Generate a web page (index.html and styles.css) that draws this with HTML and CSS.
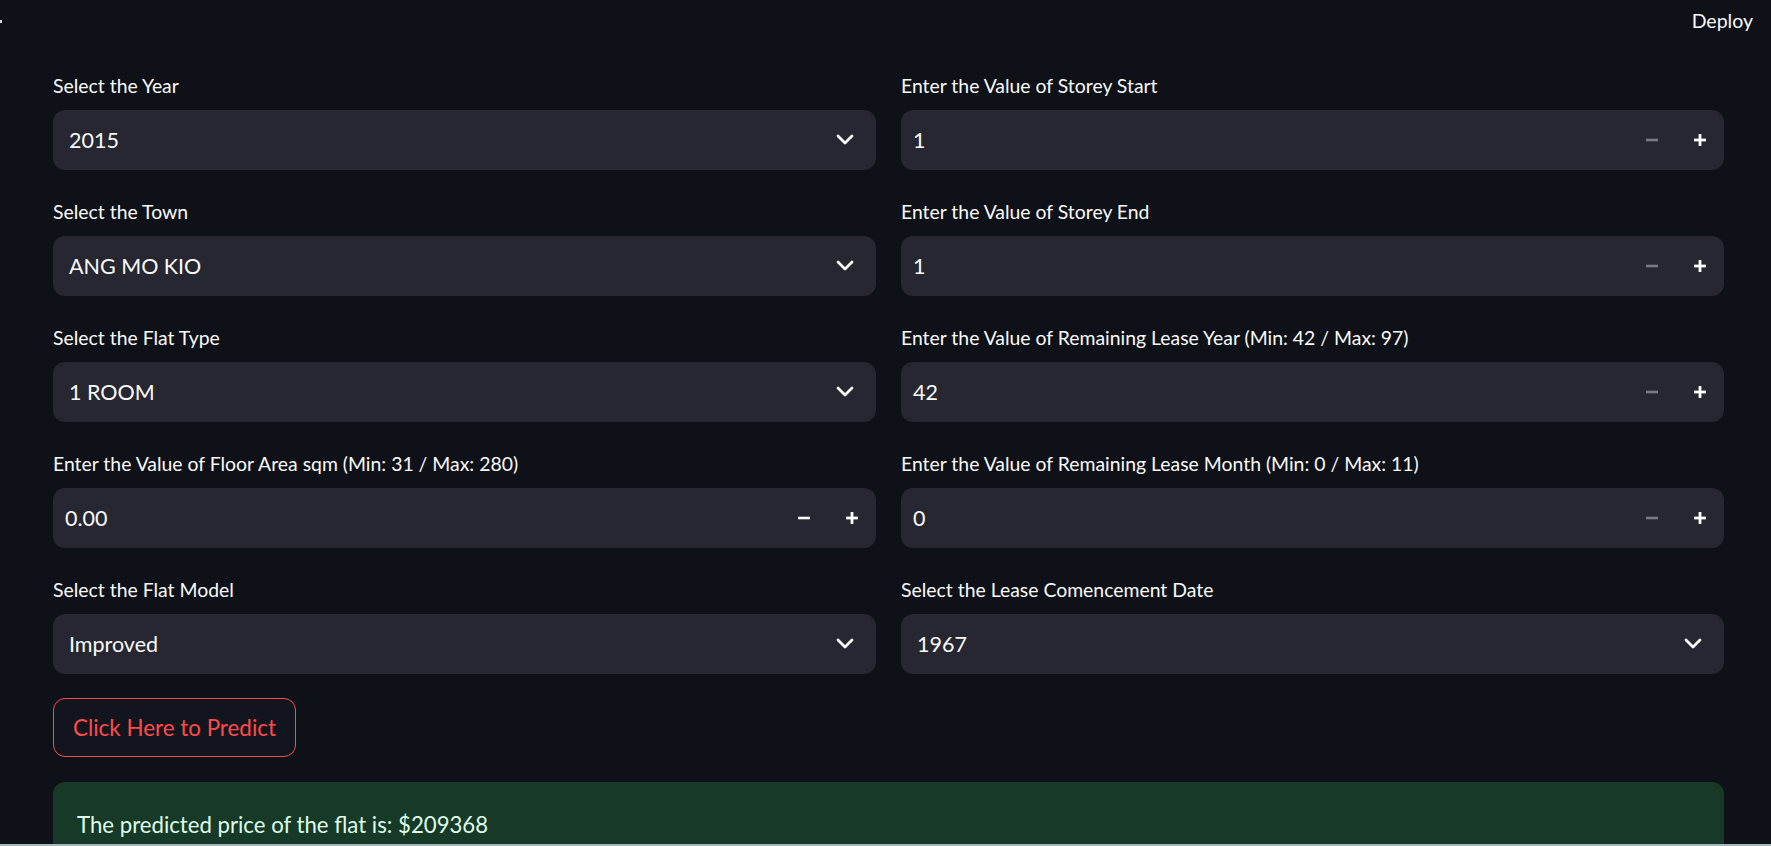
FILE: index.html
```html
<!DOCTYPE html>
<html lang="en">
<head>
<meta charset="utf-8">
<title>Flat Price Prediction</title>
<link rel="stylesheet" href="styles.css">
</head>
<body>
<header class="top">
  <span class="dot"></span>
  <span class="deploy">Deploy</span>
</header>
<main class="main">
  <div class="grid">
    <div class="col">
      <div class="field">
        <div class="label">Select the Year</div>
        <div class="box select"><span class="value">2015</span><svg class="chev" viewBox="0 0 20 12"><polyline points="3,2 10,9 17,2"/></svg></div>
      </div>
      <div class="field">
        <div class="label">Select the Town</div>
        <div class="box select"><span class="value">ANG MO KIO</span><svg class="chev" viewBox="0 0 20 12"><polyline points="3,2 10,9 17,2"/></svg></div>
      </div>
      <div class="field">
        <div class="label">Select the Flat Type</div>
        <div class="box select"><span class="value">1 ROOM</span><svg class="chev" viewBox="0 0 20 12"><polyline points="3,2 10,9 17,2"/></svg></div>
      </div>
      <div class="field">
        <div class="label">Enter the Value of Floor Area sqm (Min: 31 / Max: 280)</div>
        <div class="box number"><span class="value">0.00</span>
          <span class="step"><svg viewBox="0 0 12 12"><rect x="0" y="4.7" width="12" height="2.6"/></svg></span>
          <span class="step"><svg viewBox="0 0 12 12"><rect x="0" y="4.6" width="12" height="2.8"/><rect x="4.6" y="0" width="2.8" height="12"/></svg></span>
        </div>
      </div>
      <div class="field">
        <div class="label">Select the Flat Model</div>
        <div class="box select"><span class="value">Improved</span><svg class="chev" viewBox="0 0 20 12"><polyline points="3,2 10,9 17,2"/></svg></div>
      </div>
    </div>
    <div class="col">
      <div class="field">
        <div class="label">Enter the Value of Storey Start</div>
        <div class="box number"><span class="value">1</span>
          <span class="step disabled"><svg viewBox="0 0 12 12"><rect x="0" y="4.7" width="12" height="2.6"/></svg></span>
          <span class="step"><svg viewBox="0 0 12 12"><rect x="0" y="4.6" width="12" height="2.8"/><rect x="4.6" y="0" width="2.8" height="12"/></svg></span>
        </div>
      </div>
      <div class="field">
        <div class="label">Enter the Value of Storey End</div>
        <div class="box number"><span class="value">1</span>
          <span class="step disabled"><svg viewBox="0 0 12 12"><rect x="0" y="4.7" width="12" height="2.6"/></svg></span>
          <span class="step"><svg viewBox="0 0 12 12"><rect x="0" y="4.6" width="12" height="2.8"/><rect x="4.6" y="0" width="2.8" height="12"/></svg></span>
        </div>
      </div>
      <div class="field">
        <div class="label">Enter the Value of Remaining Lease Year (Min: 42 / Max: 97)</div>
        <div class="box number"><span class="value">42</span>
          <span class="step disabled"><svg viewBox="0 0 12 12"><rect x="0" y="4.7" width="12" height="2.6"/></svg></span>
          <span class="step"><svg viewBox="0 0 12 12"><rect x="0" y="4.6" width="12" height="2.8"/><rect x="4.6" y="0" width="2.8" height="12"/></svg></span>
        </div>
      </div>
      <div class="field">
        <div class="label">Enter the Value of Remaining Lease Month (Min: 0 / Max: 11)</div>
        <div class="box number"><span class="value">0</span>
          <span class="step disabled"><svg viewBox="0 0 12 12"><rect x="0" y="4.7" width="12" height="2.6"/></svg></span>
          <span class="step"><svg viewBox="0 0 12 12"><rect x="0" y="4.6" width="12" height="2.8"/><rect x="4.6" y="0" width="2.8" height="12"/></svg></span>
        </div>
      </div>
      <div class="field">
        <div class="label">Select the Lease Comencement Date</div>
        <div class="box select"><span class="value">1967</span><svg class="chev" viewBox="0 0 20 12"><polyline points="3,2 10,9 17,2"/></svg></div>
      </div>
    </div>
  </div>
  <button class="predict" type="button">Click Here to Predict</button>
  <div class="result">The predicted price of the flat is: $209368</div>
</main>
<div class="bottom-strip"></div>
</body>
</html>
```

FILE: styles.css
```css
html, body {
  margin: 0;
  padding: 0;
  background: #0e1117;
  color: #fafafa;
  font-family: "Lato", "Open Sans", sans-serif;
  height: 100%;
  overflow: hidden;
}

.top {
  height: 46px;
  display: flex;
  align-items: center;
  justify-content: space-between;
  padding: 0 18px 0 0;
}

.dot {
  width: 2px;
  height: 3px;
  background: #d8d9dc;
  margin-top: -4px;
}

.deploy {
  font-size: 19.5px;
  color: #fafafa;
  line-height: 30px;
  margin-top: -4px;
}

.main {
  padding: 26px 47px 0 53px;
}

.grid {
  display: grid;
  grid-template-columns: 1fr 1fr;
  column-gap: 25px;
}

.col {
  display: flex;
  flex-direction: column;
  gap: 28px;
}

.field {
  display: flex;
  flex-direction: column;
}

.label {
  font-size: 19.4px;
  line-height: 28px;
  margin-bottom: 10px;
  color: #fafafa;
}

.box {
  height: 60px;
  background: #262730;
  border-radius: 12px;
  display: flex;
  align-items: center;
  box-sizing: border-box;
}

.value {
  flex: 1;
  font-size: 21.5px;
  color: #fafafa;
}

.select .value {
  padding-left: 16px;
}

.number .value {
  padding-left: 12px;
}

.chev {
  width: 20px;
  height: 12px;
  margin-right: 21px;
  fill: none;
  stroke: #fafafa;
  stroke-width: 2.8;
  stroke-linecap: round;
  stroke-linejoin: round;
}

.step {
  width: 48px;
  height: 100%;
  display: flex;
  align-items: center;
  justify-content: center;
}

.step svg {
  width: 12px;
  height: 12px;
  fill: #fafafa;
}

.step.disabled svg {
  fill: #787a85;
}

.predict {
  display: block;
  margin-top: 24px;
  height: 59px;
  padding: 0 19px;
  background: #12151d;
  border: 1px solid #ff4b4b;
  border-radius: 12px;
  color: #ff4b4b;
  font-family: inherit;
  font-size: 22.4px;
  cursor: pointer;
}

.result {
  margin-top: 25px;
  background: #173928;
  border-radius: 12px;
  padding: 25px 24px 40px;
  color: #dffde9;
  font-size: 22.2px;
  line-height: 36px;
}

.bottom-strip {
  position: fixed;
  left: 0;
  right: 0;
  bottom: 0;
  height: 2px;
  background: #a6b8bc;
}
```
